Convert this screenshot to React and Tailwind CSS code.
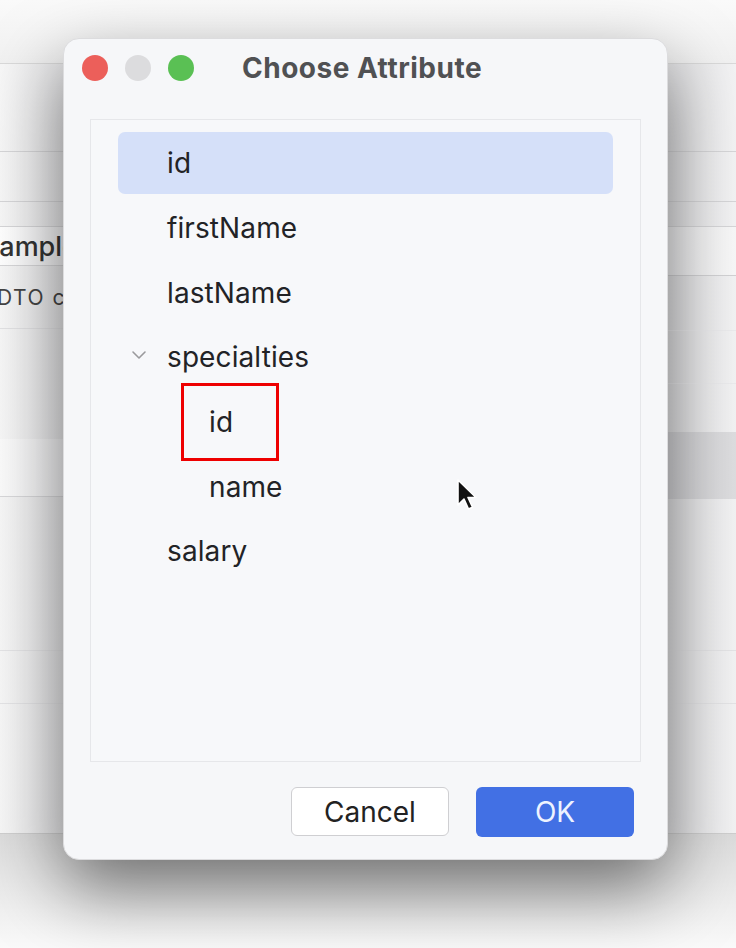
import React from "react";

const font = { fontFamily: "Inter, 'Noto Sans', 'Liberation Sans', sans-serif" };

function Row({ label, indent = false, selected = false, chevron = false }) {
  return (
    <div className="h-[64.7px] flex items-center px-[27px]">
      <div
        className={
          "relative flex items-center h-[62px] w-full rounded-[7px] " +
          (selected ? "bg-[#d5e0f9]" : "")
        }
      >
        {chevron && (
          <svg
            className="absolute left-[13px] top-[24px]"
            width="16"
            height="10"
            viewBox="0 0 16 10"
            fill="none"
          >
            <path d="M2 2 L8 8 L14 2" stroke="#9a9a9c" strokeWidth="1.6" strokeLinecap="round" strokeLinejoin="round" />
          </svg>
        )}
        <span
          className={
            "text-[28px] tracking-[0.1px] leading-none text-[#222326] " + (indent ? "ml-[91px]" : "ml-[49px]")
          }
        >
          {label}
        </span>
      </div>
    </div>
  );
}

export default function App() {
  return (
    <div className="relative w-[736px] h-[948px] overflow-hidden bg-[#f6f6f6]" style={font}>
      {/* background: top strip */}
      <div className="h-[64px] bg-gradient-to-b from-[#fafafa] to-[#f1f1f1] border-b border-[#d9d9d9]" />
      {/* back window */}
      <div className="flex h-[769px]">
        {/* left column */}
        <div className="w-[80px] flex flex-col bg-gradient-to-r from-[#f7f7f7] to-[#e3e3e5] overflow-hidden">
          <div className="h-[88px] border-b border-[#d6d6d8]" />
          <div className="h-[50px] border-b border-[#d6d6d8]" />
          <div className="h-[25px] border-b border-[#d6d6d8]" />
          <div className="h-[39px] border-b border-[#d6d6d8] bg-gradient-to-r from-white to-[#ececee] flex items-center">
            <span className="ml-[-32px] text-[27px] font-medium text-[#333] whitespace-nowrap leading-none">Example</span>
          </div>
          <div className="h-[63px] border-b border-[#e2e2e4] flex items-start pt-[16px]">
            <span className="ml-[-3px] text-[21px] text-[#444] whitespace-nowrap tracking-[1.5px]">DTO class</span>
          </div>
          <div className="h-[110px]" />
          <div className="h-[58px] bg-gradient-to-r from-[#fbfbfb] to-[#ededef] border-b border-[#d8d8da]" />
          <div className="h-[154px] border-b border-[#e4e4e6]" />
          <div className="h-[53px] border-b border-[#e4e4e6]" />
          <div className="flex-1" />
        </div>
        <div className="flex-1" />
        {/* right column */}
        <div className="w-[80px] flex flex-col bg-gradient-to-r from-[#e0e0e2] to-[#f3f3f4] overflow-hidden">
          <div className="h-[88px] border-b border-[#d6d6d8]" />
          <div className="h-[50px] border-b border-[#d6d6d8]" />
          <div className="h-[25px] border-b border-[#d6d6d8]" />
          <div className="h-[49px] border-b border-[#d2d2d4] bg-gradient-to-r from-[#ececee] to-[#f8f8f8]" />
          <div className="h-[55px] border-b border-[#ebebed]" />
          <div className="h-[53px] border-b border-[#ebebed]" />
          <div className="h-[48px]" />
          <div className="h-[67px] bg-gradient-to-r from-[#d2d2d5] to-[#dedee0]" />
          <div className="h-[152px] border-b border-[#e4e4e6]" />
          <div className="h-[53px] border-b border-[#e4e4e6]" />
          <div className="flex-1" />
        </div>
      </div>
      {/* below window */}
      <div className="h-[115px] border-t border-[#cfcfcf] bg-gradient-to-b from-[#dcdcdc] to-[#fafafa]" />

      {/* dialog */}
      <div className="absolute left-[63px] top-[38px] w-[605px] h-[822px] rounded-[16px] bg-[#f6f7f9] border border-[#dcdcde] shadow-[0_30px_70px_rgba(0,0,0,0.5)] flex flex-col">
        <div className="h-[57px] flex items-center pt-[1px] pl-[18px]">
          <div className="w-[26px] h-[26px] rounded-full bg-[#ec5f5a]" />
          <div className="w-[26px] h-[26px] rounded-full bg-[#dcdcde] ml-[17px]" />
          <div className="w-[26px] h-[26px] rounded-full bg-[#5ac054] ml-[17px]" />
          <span className="ml-[48px] text-[28px] tracking-[0.5px] font-bold text-[#505153] leading-none">Choose Attribute</span>
        </div>
        <div className="mt-[23px] mx-[26px] h-[643px] border border-[#e6e7ea] bg-[#f7f8fa] pt-[11px]">
          <Row label="id" selected />
          <Row label="firstName" />
          <Row label="lastName" />
          <Row label="specialties" chevron />
          <Row label="id" indent />
          <Row label="name" indent />
          <Row label="salary" />
        </div>
        <div className="mt-[25px] flex justify-end pr-[33px] gap-[27px]">
          <button className="w-[158px] h-[49px] rounded-[6px] bg-white border border-[#cfcfd2] text-[28px] text-[#222] leading-none">
            Cancel
          </button>
          <button className="w-[158px] h-[50px] rounded-[6px] bg-[#4270e4] text-[28px] text-[#eef3ff] leading-none">
            OK
          </button>
        </div>
      </div>

      {/* red highlight box */}
      <div className="absolute left-[181px] top-[383px] w-[98px] h-[78px] border-[3px] border-[#ee0000]" />

      {/* cursor */}
      <svg className="absolute left-[455px] top-[478px]" width="26" height="38" viewBox="0 0 26 38">
        <path d="M3 2 L3 27 L9 21 L13.5 31 L17.5 29.2 L13 19.5 L21 19.5 Z" fill="#111" stroke="#fff" strokeWidth="1.6" strokeLinejoin="round" />
      </svg>
    </div>
  );
}
